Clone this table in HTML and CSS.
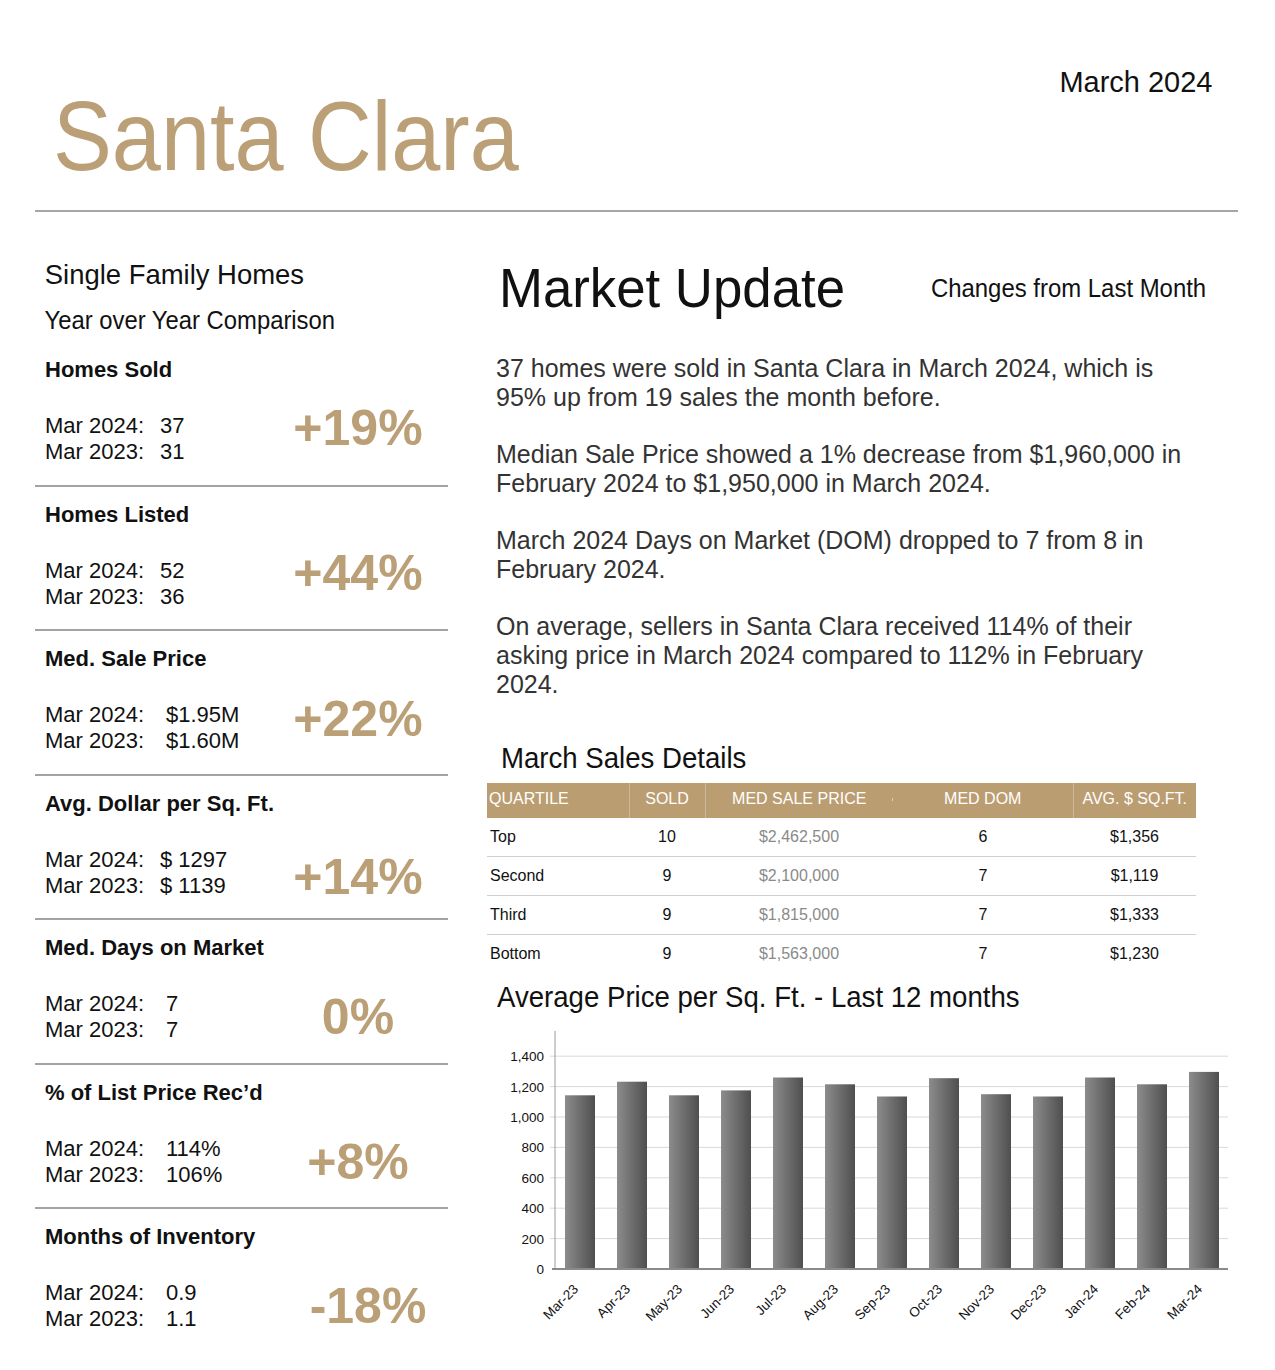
FILE: index.html
```html
<!DOCTYPE html>
<html lang="en">
<head>
<meta charset="utf-8">
<title>Santa Clara – Market Update March 2024</title>
<link rel="stylesheet" href="styles.css">
</head>
<body>
<div class="page">
  <header class="masthead">
    <h1 class="city">Santa Clara</h1>
    <div class="date">March 2024</div>
  </header>
  <div class="rule"></div>

  <main class="main">
    <section class="col-left">
      <div class="seg-title">Single Family Homes</div>
      <div class="seg-sub">Year over Year Comparison</div>

      <div class="stat first">
        <div class="stat-name">Homes Sold</div>
        <div class="stat-row">
          <div class="vals"><span>Mar 2024:</span><span>37</span><span>Mar 2023:</span><span>31</span></div>
          <div class="pct raise">+19%</div>
        </div>
      </div>

      <div class="stat">
        <div class="stat-name">Homes Listed</div>
        <div class="stat-row">
          <div class="vals"><span>Mar 2024:</span><span>52</span><span>Mar 2023:</span><span>36</span></div>
          <div class="pct raise">+44%</div>
        </div>
      </div>

      <div class="stat">
        <div class="stat-name">Med. Sale Price</div>
        <div class="stat-row">
          <div class="vals wide"><span>Mar 2024:</span><span>$1.95M</span><span>Mar 2023:</span><span>$1.60M</span></div>
          <div class="pct raise-s">+22%</div>
        </div>
      </div>

      <div class="stat">
        <div class="stat-name">Avg. Dollar per Sq. Ft.</div>
        <div class="stat-row">
          <div class="vals"><span>Mar 2024:</span><span>$ 1297</span><span>Mar 2023:</span><span>$ 1139</span></div>
          <div class="pct drop">+14%</div>
        </div>
      </div>

      <div class="stat">
        <div class="stat-name">Med. Days on Market</div>
        <div class="stat-row">
          <div class="vals wide"><span>Mar 2024:</span><span>7</span><span>Mar 2023:</span><span>7</span></div>
          <div class="pct">0%</div>
        </div>
      </div>

      <div class="stat">
        <div class="stat-name">% of List Price Rec’d</div>
        <div class="stat-row">
          <div class="vals wide"><span>Mar 2024:</span><span>114%</span><span>Mar 2023:</span><span>106%</span></div>
          <div class="pct">+8%</div>
        </div>
      </div>

      <div class="stat last">
        <div class="stat-name">Months of Inventory</div>
        <div class="stat-row">
          <div class="vals wide"><span>Mar 2024:</span><span>0.9</span><span>Mar 2023:</span><span>1.1</span></div>
          <div class="pct shift-r">-18%</div>
        </div>
      </div>
    </section>

    <section class="col-right">
      <div class="mu-head">
        <h2 class="mu-title">Market Update</h2>
        <div class="mu-changes">Changes from Last Month</div>
      </div>

      <div class="mu-text">
        <p>37 homes were sold in Santa Clara in March 2024, which is 95% up from 19 sales the month before.</p>
        <p>Median Sale Price showed a 1% decrease from $1,960,000 in February 2024 to $1,950,000 in March 2024.</p>
        <p>March 2024 Days on Market (DOM) dropped to 7 from 8 in February 2024.</p>
        <p>On average, sellers in Santa Clara received 114% of their asking price in March 2024 compared to 112% in February 2024.</p>
      </div>

      <h3 class="sales-title">March Sales Details</h3>
      <table class="sales">
        <colgroup>
          <col class="w-q"><col class="w-s"><col class="w-p"><col class="w-d"><col class="w-a">
        </colgroup>
        <thead>
          <tr>
            <th class="c-q">QUARTILE</th>
            <th class="sep">SOLD</th>
            <th class="sep c-price">MED SALE PRICE</th>
            <th>MED DOM</th>
            <th class="sep">AVG. $ SQ.FT.</th>
          </tr>
        </thead>
        <tbody>
          <tr><td class="c-q">Top</td><td>10</td><td class="price">$2,462,500</td><td>6</td><td>$1,356</td></tr>
          <tr><td class="c-q">Second</td><td>9</td><td class="price">$2,100,000</td><td>7</td><td>$1,119</td></tr>
          <tr><td class="c-q">Third</td><td>9</td><td class="price">$1,815,000</td><td>7</td><td>$1,333</td></tr>
          <tr><td class="c-q">Bottom</td><td>9</td><td class="price">$1,563,000</td><td>7</td><td>$1,230</td></tr>
        </tbody>
      </table>

      <h3 class="avg-title">Average Price per Sq. Ft. - Last 12 months</h3>
      <svg class="chart" width="753" height="330" viewBox="0 0 753 330" xmlns="http://www.w3.org/2000/svg">
        <defs>
          <linearGradient id="bar" x1="0" y1="0" x2="1" y2="0">
            <stop offset="0" stop-color="#8c8c8c"/>
            <stop offset="1" stop-color="#4f4f4f"/>
          </linearGradient>
        </defs>
        <g class="grid">
          <line x1="63" y1="41.2" x2="741" y2="41.2"/>
          <line x1="63" y1="71.6" x2="741" y2="71.6"/>
          <line x1="63" y1="102" x2="741" y2="102"/>
          <line x1="63" y1="132.4" x2="741" y2="132.4"/>
          <line x1="63" y1="162.8" x2="741" y2="162.8"/>
          <line x1="63" y1="193.2" x2="741" y2="193.2"/>
          <line x1="63" y1="223.6" x2="741" y2="223.6"/>
        </g>
        <g class="ylab">
          <text x="57" y="46.2">1,400</text>
          <text x="57" y="76.6">1,200</text>
          <text x="57" y="107">1,000</text>
          <text x="57" y="137.4">800</text>
          <text x="57" y="167.8">600</text>
          <text x="57" y="198.2">400</text>
          <text x="57" y="228.6">200</text>
          <text x="57" y="259">0</text>
        </g>
        <g fill="url(#bar)">
          <rect x="78" y="80.3" width="30" height="173.7"/>
          <rect x="130" y="66.7" width="30" height="187.3"/>
          <rect x="182" y="80.3" width="30" height="173.7"/>
          <rect x="234" y="75.4" width="30" height="178.6"/>
          <rect x="286" y="62.5" width="30" height="191.5"/>
          <rect x="338" y="69.3" width="30" height="184.7"/>
          <rect x="390" y="81.5" width="30" height="172.5"/>
          <rect x="442" y="63.2" width="30" height="190.8"/>
          <rect x="494" y="79.2" width="30" height="174.8"/>
          <rect x="546" y="81.5" width="30" height="172.5"/>
          <rect x="598" y="62.5" width="30" height="191.5"/>
          <rect x="650" y="69.3" width="30" height="184.7"/>
          <rect x="702" y="56.9" width="30" height="197.1"/>
        </g>
        <line class="yaxis" x1="68" y1="16" x2="68" y2="254"/>
        <line class="xaxis" x1="65" y1="254" x2="741" y2="254"/>
        <g class="xlab">
          <text x="92" y="275" transform="rotate(-45 92 275)">Mar-23</text>
          <text x="144" y="275" transform="rotate(-45 144 275)">Apr-23</text>
          <text x="196" y="275" transform="rotate(-45 196 275)">May-23</text>
          <text x="248" y="275" transform="rotate(-45 248 275)">Jun-23</text>
          <text x="300" y="275" transform="rotate(-45 300 275)">Jul-23</text>
          <text x="352" y="275" transform="rotate(-45 352 275)">Aug-23</text>
          <text x="404" y="275" transform="rotate(-45 404 275)">Sep-23</text>
          <text x="456" y="275" transform="rotate(-45 456 275)">Oct-23</text>
          <text x="508" y="275" transform="rotate(-45 508 275)">Nov-23</text>
          <text x="560" y="275" transform="rotate(-45 560 275)">Dec-23</text>
          <text x="612" y="275" transform="rotate(-45 612 275)">Jan-24</text>
          <text x="664" y="275" transform="rotate(-45 664 275)">Feb-24</text>
          <text x="716" y="275" transform="rotate(-45 716 275)">Mar-24</text>
        </g>
      </svg>
    </section>
  </main>
</div>
</body>
</html>
```

FILE: styles.css
```css
body {
  margin: 0;
  background: #ffffff;
  color: #111111;
  font-family: "Liberation Sans", Arial, sans-serif;
}

.page {
  width: 1275px;
}

/* ---------- masthead ---------- */
.masthead {
  display: flex;
  justify-content: space-between;
  align-items: flex-start;
  height: 126px;
  padding: 65px 63px 0 53px;
}

.city {
  margin: 16px 0 0;
  font-size: 98px;
  line-height: 110px;
  font-weight: 400;
  color: #bba077;
  transform: scaleX(0.9);
  transform-origin: left top;
}

.date {
  font-size: 30px;
  line-height: 34px;
  color: #111;
  transform: scaleX(0.966);
  transform-origin: right top;
}

.rule {
  height: 2px;
  background: #a6a6a6;
  margin: 19px 37px 0 35px;
}

/* ---------- main grid ---------- */
.main {
  display: grid;
  grid-template-columns: 413px 753px;
  column-gap: 39px;
  padding-left: 35px;
}

/* ---------- left column ---------- */
.seg-title {
  margin-top: 46px;
  padding-left: 10px;
  font-size: 28px;
  line-height: 34px;
  transform: scaleX(0.98);
  transform-origin: left top;
}

.seg-sub {
  margin-top: 13px;
  padding-left: 10px;
  font-size: 25px;
  line-height: 30px;
  transform: scaleX(0.953);
  transform-origin: left top;
}

.stat {
  border-top: 2px solid #a3a3a3;
  padding: 15px 0 19.5px 10px;
}

.stat.first {
  border-top: none;
  margin-top: 22px;
  padding-top: 0;
}

.stat-name {
  font-size: 22px;
  line-height: 26px;
  font-weight: 700;
}

.stat-row {
  display: flex;
  align-items: center;
  margin-top: 30px;
}

.vals {
  flex: 1;
  display: grid;
  grid-template-columns: 115px auto;
  font-size: 22px;
  line-height: 26px;
}

.vals.wide {
  grid-template-columns: 121px auto;
}

.pct {
  flex: none;
  width: 180px;
  text-align: center;
  font-size: 50px;
  line-height: 48px;
  font-weight: 700;
  color: #bba077;
}

.pct.raise {
  margin-top: -22px;
}

.pct.raise-s {
  margin-top: -18px;
}

.pct.drop {
  margin-bottom: -8px;
}

.pct.shift-r {
  width: 160px;
  padding-left: 20px;
}

/* ---------- right column ---------- */
.mu-head {
  display: flex;
  justify-content: space-between;
  align-items: flex-start;
  margin-top: 43.6px;
  height: 64px;
}

.mu-title {
  margin: 0 0 0 12px;
  font-size: 56px;
  line-height: 64px;
  font-weight: 400;
  transform: scaleX(0.942);
  transform-origin: left top;
}

.mu-changes {
  margin: 17.4px 34px 0 0;
  font-size: 26px;
  line-height: 30px;
  transform: scaleX(0.92);
  transform-origin: right top;
}

.mu-text {
  margin-top: 34.4px;
  padding: 0 40px 0 9px;
  font-size: 25px;
  line-height: 28.7px;
  color: #333333;
}

.mu-text p {
  margin: 0 0 28.7px;
}

.mu-text p:last-child {
  margin-bottom: 0;
}

.sales-title,
.avg-title {
  font-size: 30px;
  line-height: 36px;
  font-weight: 400;
  transform: scaleX(0.92);
  transform-origin: left top;
}

.sales-title {
  margin: 41.2px 0 0 14px;
}

.avg-title {
  margin: 5.6px 0 0 10px;
}

/* ---------- table ---------- */
.sales {
  margin-top: 7.4px;
  width: 709px;
  table-layout: fixed;
  border-collapse: collapse;
  font-size: 16px;
}

.w-q { width: 142px; }
.w-s { width: 76px; }
.w-p { width: 188px; }
.w-d { width: 180px; }
.w-a { width: 123px; }

.sales th {
  background: #bb9d72;
  color: #ffffff;
  font-weight: 400;
  line-height: 31px;
  padding: 0 0 4px;
  text-align: center;
  white-space: nowrap;
}

.sales th.sep {
  border-left: 1px solid #cdb999;
}

.sales th.c-price {
  position: relative;
}

.sales th.c-price::after {
  content: "";
  position: absolute;
  right: 0;
  top: 15px;
  width: 1px;
  height: 3px;
  background: #dccdb5;
}

.sales td {
  padding: 0;
  line-height: 38px;
  text-align: center;
  color: #111;
}

.sales tbody tr + tr td {
  border-top: 1px solid #cfcfcf;
}

.sales .c-q {
  text-align: left;
  padding-left: 3px;
}

.sales th.c-q {
  padding-left: 2px;
}

.sales td.price {
  color: #8a8a8a;
}

/* ---------- chart ---------- */
.chart {
  display: block;
}

.chart .grid line {
  stroke: #d9d9d9;
  stroke-width: 1;
}

.chart .yaxis {
  stroke: #9a9a9a;
  stroke-width: 1;
}

.chart .xaxis {
  stroke: #8a8a8a;
  stroke-width: 2;
}

.chart text {
  font-family: "Liberation Sans", Arial, sans-serif;
  font-size: 13.5px;
  fill: #111;
}

.chart .ylab text,
.chart .xlab text {
  text-anchor: end;
}
```
